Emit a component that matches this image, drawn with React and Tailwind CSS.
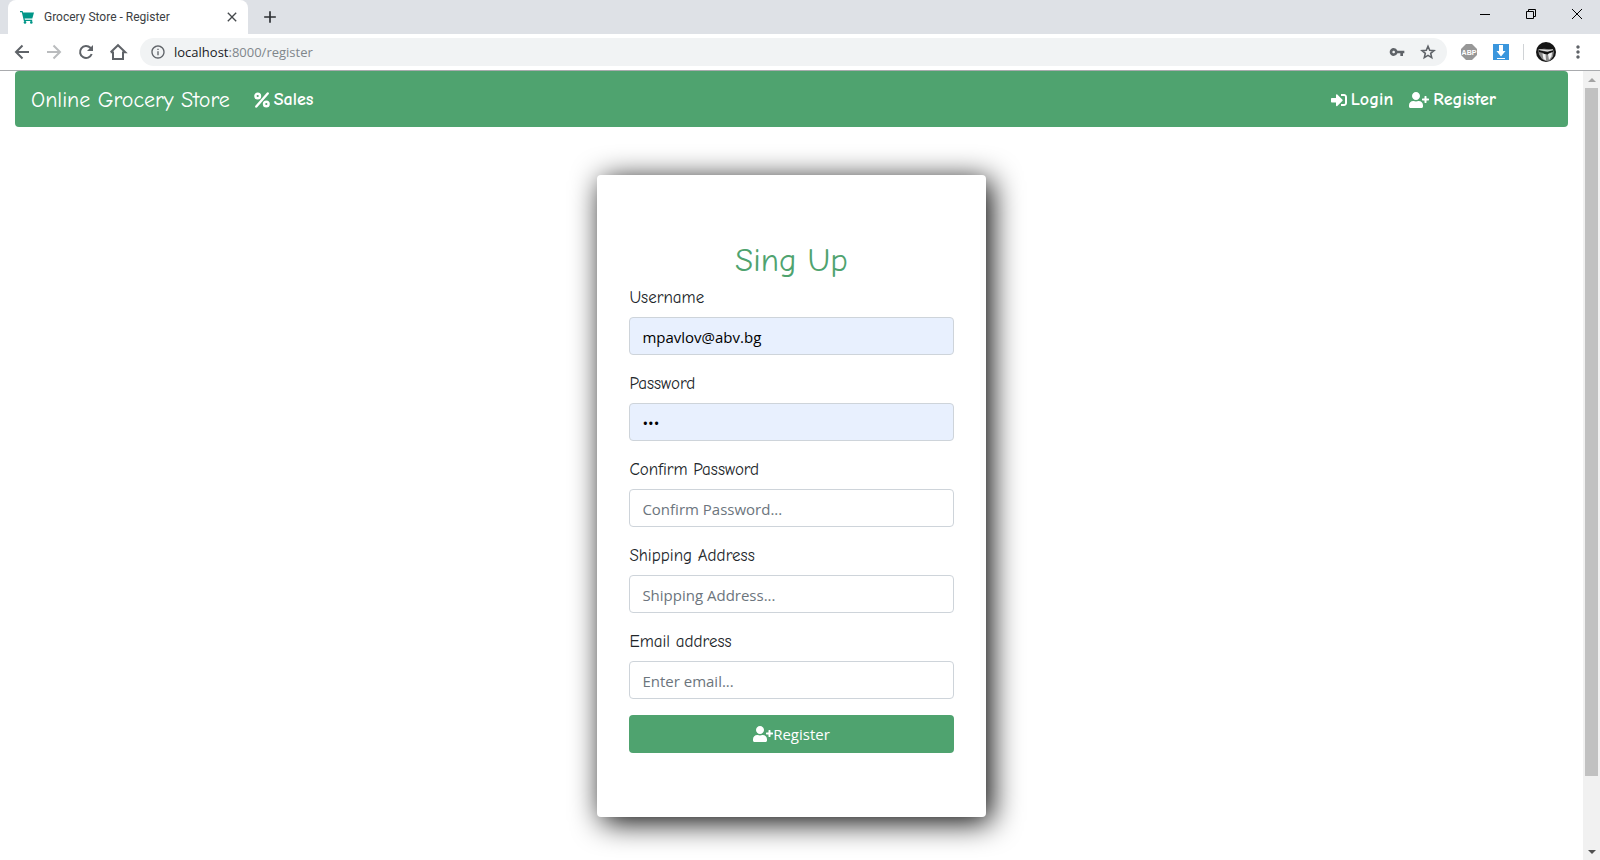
import React from "react";
import { FaSignInAlt, FaUserPlus } from "react-icons/fa";
import {
  MdInfoOutline,
  MdVpnKey,
  MdMoreVert,
  MdClose,
  MdAdd,
} from "react-icons/md";

function TabStrip() {
  return (
    <div className="flex h-[34px] items-stretch bg-[#dee1e6] pl-2">
      <div className="flex w-60 items-center rounded-t-lg bg-white pl-3 pr-2 text-xs text-[#3c4043]">
        <svg className="mr-2.5" width="14" height="14" viewBox="0 0 14 14" fill="#009688">
          <path d="M0 1h2.600l.5 1.500H14L12.300 8.500H4.600l.3 1.200h7.300v1.300H3.900L1.800 2.300H0z" />
          <circle cx="5" cy="12.400" r="1.300" />
          <circle cx="11.300" cy="12.400" r="1.300" />
        </svg>
        <span className="flex-1 whitespace-nowrap">Grocery Store - Register</span>
        <button aria-label="Close tab" className="text-[#45494d]">
          <MdClose className="size-4" />
        </button>
      </div>
      <button aria-label="New tab" className="ml-3 text-[#2c2f33]">
        <MdAdd className="size-5" />
      </button>
      <div className="ml-auto flex text-black">
        <button aria-label="Minimize" className="grid w-[46px] place-items-center pb-1.5">
          <svg width="10" height="10" viewBox="0 0 10 10" stroke="currentColor"><path d="M0 5.5h10" /></svg>
        </button>
        <button aria-label="Restore" className="grid w-[46px] place-items-center pb-1.5">
          <svg width="10" height="10" viewBox="0 0 10 10" fill="none" stroke="currentColor"><path d="M.5 2.5h7v7h-7zM2.5 2.5v-2h7v7h-2" /></svg>
        </button>
        <button aria-label="Close" className="grid w-[46px] place-items-center pb-1.5">
          <svg width="10" height="10" viewBox="0 0 10 10" stroke="currentColor"><path d="M0 0l10 10M10 0L0 10" /></svg>
        </button>
      </div>
    </div>
  );
}

function Toolbar() {
  return (
    <div className="flex h-[37px] items-center border-b border-[#a9abae] bg-white pl-3 pr-3 text-[#5f6368]">
      <div className="flex items-center gap-3">
        <button aria-label="Back">
          <svg width="20" height="20" viewBox="0 0 20 20" fill="none" stroke="currentColor" strokeWidth="2"><path d="M17 10H4.500M10.500 3.500L4 10l6.500 6.500" /></svg>
        </button>
        <button aria-label="Forward" className="text-[#babcbe]">
          <svg width="20" height="20" viewBox="0 0 20 20" fill="none" stroke="currentColor" strokeWidth="2"><path d="M3 10h12.500M9.500 3.500L16 10l-6.500 6.500" /></svg>
        </button>
        <button aria-label="Reload">
          <svg width="20" height="20" viewBox="0 0 20 20" fill="none" stroke="currentColor" strokeWidth="2">
            <path d="M15.700 12A6 6 0 1 1 14.400 5.800L15.500 7" />
            <path d="M17 3v6h-6z" fill="currentColor" stroke="none" />
          </svg>
        </button>
        <button aria-label="Home">
          <svg width="20" height="20" viewBox="0 0 20 20" fill="none" stroke="currentColor" strokeWidth="2">
            <path d="M5 9.500V17h10V9.500M2.700 10.300H5M15 10.300h2.300L10 3.200l-7.300 7.100" />
          </svg>
        </button>
      </div>
      <div className="ml-3 flex h-7 flex-1 items-center rounded-full bg-[#f1f3f4] px-2.5">
        <MdInfoOutline className="mr-2 size-4" />
        <div role="textbox" aria-label="Address" className="flex-1 pt-px font-['Segoe_UI','Open_Sans',sans-serif] text-[13px]">
          <span className="text-[#202124]">localhost</span>
          <span className="text-[#80868b]">:8000/register</span>
        </div>
        <button aria-label="Saved passwords"><MdVpnKey className="size-4" /></button>
        <button aria-label="Bookmark" className="ml-3.5">
          <svg width="18" height="18" viewBox="0 0 18 18" fill="none" stroke="currentColor" strokeWidth="1.600">
            <path d="M9 3.200l1.700 4 4.300.4-3.300 2.800 1 4.200L9 12.400l-3.700 2.200 1-4.200L3 7.600l4.300-.4z" />
          </svg>
        </button>
      </div>
      <div className="ml-3.5 flex items-center">
        <button aria-label="Ad blocker">
          <svg width="16" height="16" viewBox="0 0 16 16">
            <path d="M5 0h6l5 5v6l-5 5H5l-5-5V5z" fill="#979797" />
            <text x="8" y="10.500" textAnchor="middle" fontSize="7" fontWeight="bold" fill="#fff" fontFamily="Liberation Sans, sans-serif">ABP</text>
          </svg>
        </button>
        <button aria-label="Downloads" className="ml-4">
          <svg width="16" height="16" viewBox="0 0 16 16">
            <path d="M0 0h16v16H0z" fill="#3a96dd" />
            <path d="M6 1h4v6h2.500L8 12.500 3.500 7H6zM4 14h8v1H4z" fill="#fff" />
          </svg>
        </button>
        <span className="ml-3.5 mr-3 h-4 w-px bg-[#d0d3d6]" />
        <button aria-label="Profile">
          <svg width="20" height="20" viewBox="0 0 20 20">
            <circle cx="10" cy="10" r="10" fill="#151515" />
            <path d="M2 7.500l6-.8 9 .8 1 2-1 5-3 4-4 .8-4-2.300-3-4.500z" fill="#8a8a8a" />
            <path d="M2.500 8l5 1.200 2 .3 2 .2 6-1.400-.3 1.500-4 1.500-.8 1.200-4-.5-1-1-4.500-1z" fill="#111" />
            <path d="M6.500 11.800l3 .4.5 6-2.500-1zM12 12l4-1.500-.5 4-2.500 3.500z" fill="#f2f2f2" />
            <path d="M3 7.200l5.500.5 3 .6 5.500-1v.8l-5.500 1.300-3-.4-5-1z" fill="#e0e0e0" />
          </svg>
        </button>
        <button aria-label="Menu" className="ml-3"><MdMoreVert className="size-5" /></button>
      </div>
    </div>
  );
}

function PercentIcon() {
  return (
    <svg width="16" height="16" viewBox="0 0 16 16" fill="none" stroke="currentColor">
      <circle cx="3.700" cy="4" r="2.300" strokeWidth="2.400" />
      <circle cx="12.300" cy="12" r="2.300" strokeWidth="2.400" />
      <path d="M13.700 1.500L2.300 14.500" strokeWidth="2.400" strokeLinecap="round" />
    </svg>
  );
}

function NavBar() {
  return (
    <nav className="flex h-14 items-center rounded bg-[#4fa36f] px-4 pt-0.5 font-['Comic_Sans_MS','Comic_Neue','Open_Sans',sans-serif] text-lg text-white">
      <a href="#home" className="mr-4 text-[22px]">Online Grocery Store</a>
      <a href="#sales" className="flex items-center gap-1 px-2 font-semibold"><PercentIcon /> Sales</a>
      <div className="ml-auto mr-12 flex font-semibold">
        <a href="#login" className="flex items-center gap-1 px-2"><FaSignInAlt className="size-4" /> Login</a>
        <a href="#register" className="flex items-center gap-1 px-2"><FaUserPlus className="h-4 w-5" /> Register</a>
      </div>
    </nav>
  );
}

function Field({ id, label, filled, ...props }) {
  return (
    <div className="mb-4 flex flex-col gap-1.5">
      <label htmlFor={id} className="font-['Comic_Sans_MS','Comic_Neue','Open_Sans',sans-serif] text-[17px] leading-[26px] font-medium text-[#212529]">{label}</label>
      <input
        id={id}
        className={
          "h-[38px] w-full rounded border border-[#ced4da] px-3 pt-0.5 text-[15px] outline-none placeholder:text-[#6c757d] " +
          (filled ? "bg-[#e8f0fe] text-black" : "bg-white text-[#495057]")
        }
        {...props}
      />
    </div>
  );
}

function SignUpForm() {
  return (
    <form
      onSubmit={(e) => e.preventDefault()}
      className="mx-auto mt-12 w-1/4 rounded bg-white px-8 py-16 font-['Segoe_UI','Open_Sans',sans-serif] shadow-[5px_5px_30px_#000]"
    >
      <h2 className="mb-1 text-center font-['Comic_Sans_MS','Comic_Neue','Open_Sans',sans-serif] text-[33px] leading-[42px] text-[#4fa36f]">Sing Up</h2>
      <Field id="username" label="Username" type="text" defaultValue="mpavlov@abv.bg" filled />
      <Field id="password" label="Password" type="password" defaultValue="abc" filled />
      <Field id="confirm" label="Confirm Password" type="password" placeholder="Confirm Password..." />
      <Field id="address" label="Shipping Address" type="text" placeholder="Shipping Address..." />
      <Field id="email" label="Email address" type="email" placeholder="Enter email..." />
      <button className="flex h-[38px] w-full items-center justify-center rounded bg-[#4fa36f] text-[15px] text-white">
        <FaUserPlus className="h-4 w-5" />Register
      </button>
    </form>
  );
}

function ScrollBar() {
  return (
    <div className="flex w-[17px] flex-col items-center bg-[#f1f1f1]">
      <svg width="17" height="17" viewBox="0 0 17 17"><path d="M5 11h8L9 7z" fill="#a3a3a3" /></svg>
      <div className="w-[13px] flex-[688] bg-[#c1c1c1]" />
      <div className="flex-[67]" />
      <svg width="17" height="17" viewBox="0 0 17 17"><path d="M5 7h8l-4 4z" fill="#505050" /></svg>
    </div>
  );
}

export default function App() {
  return (
    <div className="flex h-screen flex-col overflow-hidden bg-white font-['Segoe_UI',Roboto,sans-serif]">
      <TabStrip />
      <Toolbar />
      <div className="flex min-h-0 flex-1">
        <main className="flex-1 overflow-hidden px-[15px]">
          <NavBar />
          <SignUpForm />
        </main>
        <ScrollBar />
      </div>
    </div>
  );
}
